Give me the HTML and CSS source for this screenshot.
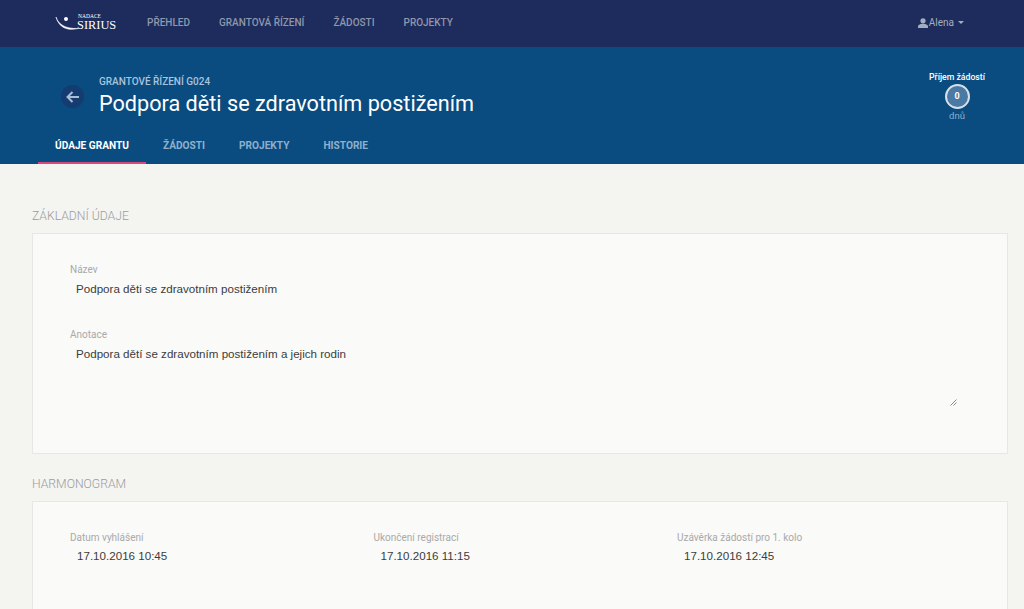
FILE: index.html
```html
<!DOCTYPE html>
<html>
<head lang="cs">
    <meta charset="UTF-8">
    <title>Grantové řízení G024</title>
    <link rel="stylesheet" href="styles.css">
</head>
<body>
    <nav class="topbar">
        <a class="logo" href="#">
            <svg class="logo-mark" width="24" height="18" viewBox="0 0 24 18">
                <path d="M1 3 C3 10 10 15 23 14.5 C13 17 4 14 1 3 Z" fill="#fff" stroke="#fff" stroke-width="0.6"/>
                <circle cx="11" cy="5" r="2" fill="#fff"/>
            </svg>
            <span class="logo-text">
                <span class="logo-small">NADACE</span>
                <span class="logo-big">SIRIUS</span>
            </span>
        </a>
        <ul class="menu">
            <li>PŘEHLED</li>
            <li>GRANTOVÁ ŘÍZENÍ</li>
            <li>ŽÁDOSTI</li>
            <li>PROJEKTY</li>
        </ul>
        <div class="user">
            <svg width="10" height="10" viewBox="0 0 10 10">
                <circle cx="5" cy="2.8" r="2.6" fill="#a4adc0"/>
                <path d="M0 10 V8.4 C0 6.6 3 5.8 5 5.8 C7 5.8 10 6.6 10 8.4 V10 Z" fill="#a4adc0"/>
            </svg>
            <span>Alena</span>
            <span class="caret"></span>
        </div>
    </nav>

    <header class="grant-head">
        <div class="grant-row">
            <a class="back" href="#">
                <svg width="14" height="12" viewBox="0 0 14 12">
                    <path d="M6.5 1 L1.5 6 L6.5 11 M2 6 H13" fill="none" stroke="#a9bdd4" stroke-width="2"/>
                </svg>
            </a>
            <div class="grant-title">
                <div class="grant-code">GRANTOVÉ ŘÍZENÍ G024</div>
                <h1>Podpora děti se zdravotním postižením</h1>
            </div>
            <div class="counter">
                <div class="counter-label">Příjem žádostí</div>
                <div class="counter-circle">0</div>
                <div class="counter-unit">dnů</div>
            </div>
        </div>
        <ul class="tabs">
            <li class="current">ÚDAJE GRANTU</li>
            <li>ŽÁDOSTI</li>
            <li>PROJEKTY</li>
            <li>HISTORIE</li>
        </ul>
    </header>

    <main class="content">
        <h2>ZÁKLADNÍ ÚDAJE</h2>
        <section class="card card-basic">
            <label>Název</label>
            <div class="value">Podpora děti se zdravotním postižením</div>
            <label class="second">Anotace</label>
            <div class="value area">
                Podpora dětí se zdravotním postižením a jejich rodin
                <svg class="grip" width="7" height="7" viewBox="0 0 7 7">
                    <path d="M0.5 6.5 L6.5 0.5 M3.5 6.5 L6.5 3.5" stroke="#8a8a8a" stroke-width="1" fill="none"/>
                </svg>
            </div>
        </section>

        <h2>HARMONOGRAM</h2>
        <section class="card card-dates">
            <div class="date-col">
                <label>Datum vyhlášení</label>
                <div class="value">17.10.2016 10:45</div>
            </div>
            <div class="date-col">
                <label>Ukončení registrací</label>
                <div class="value">17.10.2016 11:15</div>
            </div>
            <div class="date-col">
                <label>Uzávěrka žádostí pro 1. kolo</label>
                <div class="value">17.10.2016 12:45</div>
            </div>
        </section>
    </main>
</body>
</html>
```

FILE: styles.css
```css
*{
    margin: 0px;
    padding: 0px;
    box-sizing: border-box;
}
html,body{
    height: 609px;
    overflow: hidden;
}
body{
    background-color: #f4f4f1;
    font-family: Roboto, "Liberation Sans", sans-serif;
}
ul{
    list-style: none;
}
a{
    text-decoration: none;
}

/* top navigation */
.topbar{
    height: 47px;
    background-color: #1d2c5c;
    display: flex;
    align-items: center;
    padding-left: 55px;
    padding-right: 60px;
    padding-bottom: 2px;
}
.logo{
    display: flex;
    align-items: center;
    width: 92px;
    color: #fff;
}
.logo-mark{
    margin-right: -2px;
}
.logo-text{
    display: flex;
    flex-direction: column;
    font-family: "Liberation Serif", serif;
    line-height: 1;
}
.logo-small{
    font-size: 5.5px;
    height: 5px;
    margin-left: 1px;
}
.logo-big{
    font-size: 12.4px;
    height: 13px;
    font-weight: 400;
}
.menu{
    display: flex;
    gap: 29px;
    font-size: 10px;
    font-weight: 500;
    color: #8f97ad;
}
.user{
    margin-left: auto;
    display: flex;
    align-items: center;
    gap: 1px;
    font-size: 10px;
    color: #a4adc0;
}
.caret{
    width: 0px;
    height: 0px;
    margin-left: 3px;
    border-left: 3px solid transparent;
    border-right: 3px solid transparent;
    border-top: 3px solid #a4adc0;
}

/* blue grant header */
.grant-head{
    height: 117px;
    background-color: #0a4c80;
}
.grant-row{
    height: 81px;
    display: flex;
    padding-left: 61px;
    padding-right: 39px;
}
.back{
    width: 23px;
    height: 23px;
    margin-top: 38px;
    margin-right: 15px;
    border-radius: 50%;
    background-color: #143c70;
    display: flex;
    align-items: center;
    justify-content: center;
}
.grant-title{
    padding-top: 29px;
    color: #fff;
}
.grant-code{
    font-size: 10px;
    font-weight: 500;
    line-height: 12px;
    color: #a9c3dc;
}
h1{
    font-size: 21.65px;
    font-weight: 400;
    line-height: 28px;
    margin-top: 2px;
}
.counter{
    margin-left: auto;
    padding-top: 25px;
    display: flex;
    flex-direction: column;
    align-items: center;
}
.counter-label{
    font-size: 8.7px;
    font-weight: 500;
    line-height: 11px;
    color: #fff;
}
.counter-circle{
    width: 25px;
    height: 25px;
    margin-top: 1px;
    border: 2px solid #d5e0ea;
    border-radius: 50%;
    background-color: #4a7aa3;
    color: #fff;
    font-size: 9px;
    font-weight: 700;
    line-height: 21px;
    text-align: center;
}
.counter-unit{
    font-size: 9.5px;
    line-height: 12px;
    margin-top: 1px;
    color: #8fb0cc;
}
.tabs{
    display: flex;
    height: 36px;
    padding-left: 38px;
    font-size: 10.15px;
    font-weight: 700;
    color: #8fb0cc;
}
.tabs li{
    padding: 10px 17px 0px 17px;
    line-height: 16px;
}
.tabs .current{
    color: #fff;
    border-bottom: 2px solid #d6487e;
}

/* page body */
.content{
    height: 445px;
    overflow: hidden;
    padding: 45px 16px 0px 32px;
}
h2{
    font-size: 12.2px;
    font-weight: 300;
    line-height: 14px;
    color: #9a9c9f;
}
.card{
    margin-top: 10px;
    background-color: #fafaf8;
    border: 1px solid #e7e7e4;
    padding-left: 37px;
}
.card-basic{
    height: 221px;
    margin-bottom: 23px;
    padding-top: 30px;
}
.card-dates{
    height: 140px;
    padding-top: 30px;
    display: flex;
}
.date-col{
    width: 303.5px;
}
label{
    display: block;
    font-size: 10px;
    line-height: 12px;
    color: #a9a9a9;
}
.second{
    margin-top: 32px;
}
.value{
    position: relative;
    margin-top: 5px;
    padding-left: 6px;
    font-family: "Liberation Sans", sans-serif;
    font-size: 11.6px;
    line-height: 16px;
    color: #3c3c3c;
}
.area{
    height: 60px;
    width: 887px;
}
.date-col .value{
    margin-top: 4px;
    padding-left: 7px;
}
.grip{
    position: absolute;
    right: 0px;
    bottom: 0px;
}
```
